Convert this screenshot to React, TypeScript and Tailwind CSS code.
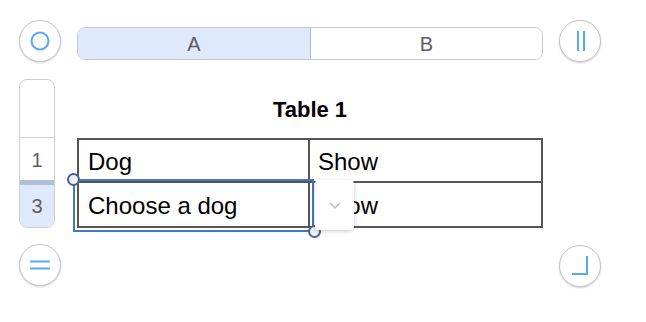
import React from "react";

const font = { fontFamily: '"Liberation Sans", Arial, sans-serif' };

function RoundButton({ children }: { children: React.ReactNode }) {
  return (
    <div className="w-[42px] h-[42px] rounded-full border border-[#c4c4c4] bg-white shadow-[0_1px_2px_rgba(0,0,0,0.18)] flex items-center justify-center">
      <svg width="40" height="40" viewBox="0 0 40 40" fill="none">
        {children}
      </svg>
    </div>
  );
}

export default function App() {
  return (
    <div className="w-[646px] h-[322px] bg-white pl-[19px] pt-[20px]" style={font}>
      <div className="flex gap-[16px]">
        {/* left rail */}
        <div className="flex flex-col w-[42px]">
          <RoundButton>
            <circle cx="20" cy="20" r="8.5" stroke="#5aa6f2" strokeWidth="2" />
          </RoundButton>
          <div className="mt-[17px] w-[36px] h-[149px] rounded-[8px] border border-[#cdcdcd] overflow-hidden flex flex-col bg-white">
            <div className="h-[58px] border-b border-[#d4d4d4]" />
            <div className="h-[42px] pt-[2px] flex items-center justify-center text-[20px] text-[#5e5e5e]">1</div>
            <div className="h-[5px] bg-[#afc0d8]" />
            <div className="flex-1 flex items-center justify-center bg-[#deeafb] text-[20px] text-[#5e5e5e]">3</div>
          </div>
          <div className="mt-[16px]">
            <RoundButton>
              <line x1="10" y1="16.5" x2="30" y2="16.5" stroke="#5aa6f2" strokeWidth="2" />
              <line x1="10" y1="23.5" x2="30" y2="23.5" stroke="#5aa6f2" strokeWidth="2" />
            </RoundButton>
          </div>
        </div>

        {/* center */}
        <div className="w-[466px] flex flex-col">
          <div className="mt-[7px] h-[33px] flex rounded-[8px] border border-[#c8c8c8] overflow-hidden">
            <div className="w-[233px] bg-[#deeafb] border-r border-[#a9bbd6] flex items-center justify-center text-[20px] text-[#5e5e5e]">
              A
            </div>
            <div className="flex-1 bg-white flex items-center justify-center text-[20px] text-[#5e5e5e]">B</div>
          </div>
          <div className="mt-[36px] h-[28px] leading-[28px] text-center text-[22px] font-bold text-black">Table 1</div>
          <div className="mt-[14px] relative">
            <div className="border-2 border-[#555555] text-[24px] text-black">
              <div className="flex h-[43px] border-b-2 border-[#555555]">
                <div className="w-[231px] border-r-2 border-[#555555] flex items-center pl-[9px] pt-[2px]">Dog</div>
                <div className="flex-1 flex items-center pl-[8px] pt-[2px]">Show</div>
              </div>
              <div className="flex h-[43px]">
                <div className="w-[231px] border-r-2 border-[#555555] flex items-center pl-[9px] pt-[3px]">Choose a dog</div>
                <div className="flex-1 flex items-center pl-[8px] pt-[3px]">Show</div>
              </div>
            </div>
            {/* selection */}
            <div className="absolute left-[-4px] top-[41px] w-[241px] h-[53px] border-2 border-[#3f78c8]" />
            <div className="absolute left-[-10px] top-[35px] w-[13px] h-[13px] rounded-full bg-[#eef0f5] border-2 border-[#4d5f8e]" />
            <div className="absolute left-[231px] top-[87px] w-[13px] h-[13px] rounded-full bg-[#eef0f5] border-2 border-[#4d5f8e]" />
            {/* dropdown */}
            <div className="absolute left-[238px] top-[42px] w-[39px] h-[50px] rounded-[4px] bg-white shadow-[0_1px_4px_rgba(0,0,0,0.22)] flex items-center justify-center">
              <svg width="14" height="9" viewBox="0 0 14 9" fill="none">
                <path d="M2 2 L7 7 L12 2" stroke="#bdbdbd" strokeWidth="1.5" />
              </svg>
            </div>
          </div>
        </div>

        {/* right rail */}
        <div className="flex flex-col justify-between w-[42px] h-[267px]">
          <RoundButton>
            <line x1="18" y1="10" x2="18" y2="30" stroke="#5aa6f2" strokeWidth="2" />
            <line x1="24" y1="10" x2="24" y2="30" stroke="#5aa6f2" strokeWidth="2" />
          </RoundButton>
          <RoundButton>
            <path d="M27 10 V28 H12" stroke="#5aa6f2" strokeWidth="2" />
          </RoundButton>
        </div>
      </div>
    </div>
  );
}
